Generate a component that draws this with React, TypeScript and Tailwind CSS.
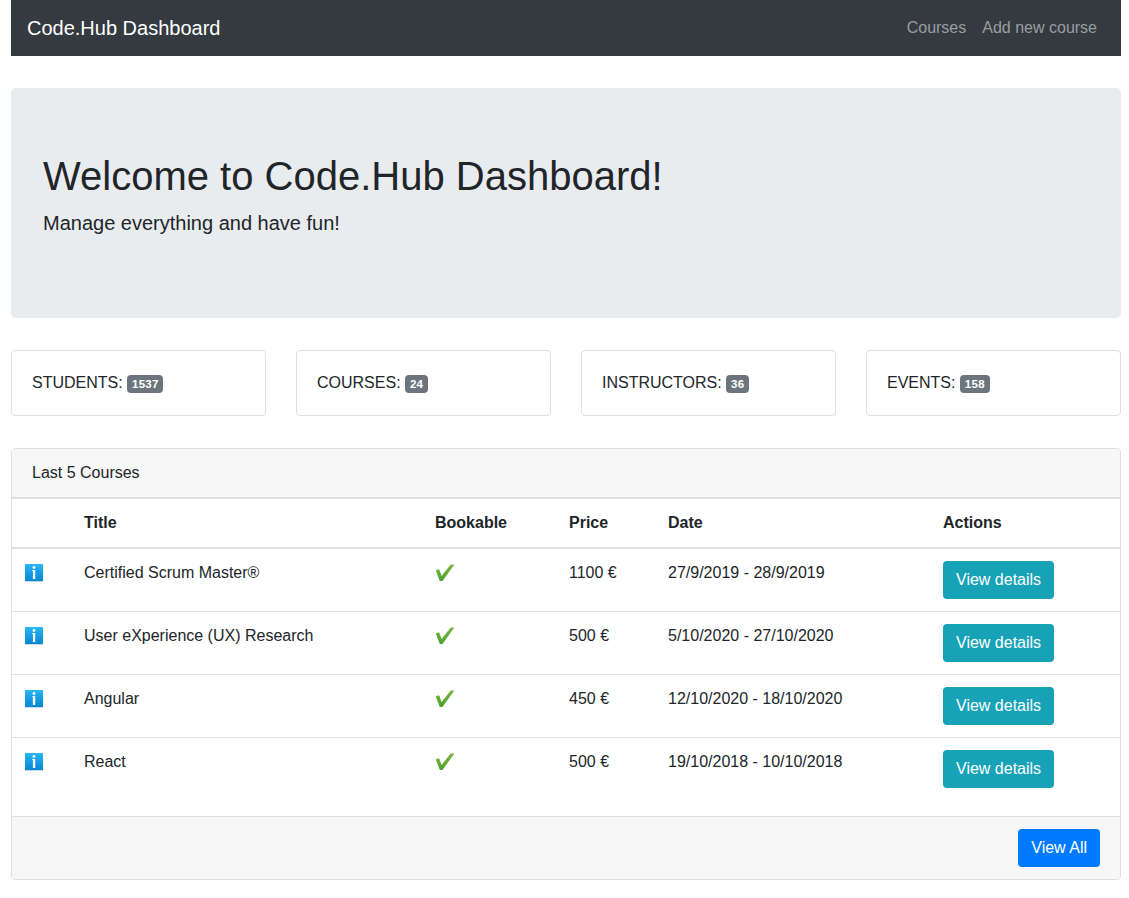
const stats = [
  { label: 'STUDENTS:', value: 1537 },
  { label: 'COURSES:', value: 24 },
  { label: 'INSTRUCTORS:', value: 36 },
  { label: 'EVENTS:', value: 158 },
];
const courses = [
  { title: 'Certified Scrum Master®', price: '1100 €', date: '27/9/2019 - 28/9/2019' },
  { title: 'User eXperience (UX) Research', price: '500 €', date: '5/10/2020 - 27/10/2020' },
  { title: 'Angular', price: '450 €', date: '12/10/2020 - 18/10/2020' },
  { title: 'React', price: '500 €', date: '19/10/2018 - 10/10/2018' },
];
const columns = 'grid grid-cols-[60px_351px_134px_99px_275px_1fr]';

function InfoIcon() {
  return (
    <svg viewBox="0 0 20 20" className="mt-[2px] h-5 w-5">
      <defs>
        <linearGradient id="info" x1="0" y1="0" x2="0" y2="1">
          <stop offset="0" stopColor="#29b6f6" />
          <stop offset="1" stopColor="#0288d1" />
        </linearGradient>
      </defs>
      <rect x="1" y="1.4" width="18" height="17.4" rx="0.6" fill="#b9cdd8" />
      <rect x="1" y="1" width="18" height="17" rx="0.5" fill="url(#info)" />
      <circle cx="10" cy="4.5" r="1.4" fill="#fff" />
      <path d="M8.2 7H11.2V16H8.9V8.1H8.2Z" fill="#fff" />
    </svg>
  );
}

function CheckIcon() {
  return (
    <svg viewBox="0 0 20 20" className="mt-[2px] h-5 w-5">
      <defs>
        <linearGradient id="check" x1="0" y1="0" x2="0" y2="1">
          <stop offset="0" stopColor="#7cb342" />
          <stop offset="1" stopColor="#4ca22f" />
        </linearGradient>
      </defs>
      <path
        d="M1 8Q0.8 7.4 1.5 7.1L3.3 6.4Q4 6.2 4.3 6.8L6.6 12.9L15.5 1.8Q15.8 1.5 16.3 1.5H18.7Q19.4 1.6 18.9 2.3L7.8 17.5Q7.4 18.1 6.8 18.1H5.5Q4.8 18.1 4.6 17.5Z"
        fill="url(#check)"
      />
    </svg>
  );
}

export default function App() {
  return (
    <div className="h-[898px] bg-white pr-2 pl-[11px] font-['Liberation_Sans',Arial,sans-serif] text-base leading-6 text-[#212529]">
      <nav className="flex h-14 items-center justify-between bg-[#343a40] px-4">
        <span className="text-xl leading-[30px] text-white">Code.Hub Dashboard</span>
        <div className="flex gap-4 pr-2 text-[#9a9da0]">
          <span>Courses</span>
          <span>Add new course</span>
        </div>
      </nav>
      <header className="mt-8 h-[230px] rounded-[4.8px] bg-[#e9ecef] px-8 pt-16">
        <h1 className="mb-2 text-[40px] leading-[48px]">Welcome to Code.Hub Dashboard!</h1>
        <p className="text-xl leading-[30px]">Manage everything and have fun!</p>
      </header>
      <section className="mt-8 grid grid-cols-4 gap-[30px]">
        {stats.map((s) => (
          <div key={s.label} className="h-[66px] rounded border border-[#dfdfdf] p-5">
            {s.label}{' '}
            <span className="inline-block rounded bg-[#6c757d] pt-[3px] pr-[4.7px] pb-[3px] pl-[4.9px] align-baseline text-[11.5px] leading-3 font-bold tracking-[0.28px] text-white">{s.value}</span>
          </div>
        ))}
      </section>
      <section className="mt-8 overflow-hidden rounded border border-[#dfdfdf]">
        <div className="h-[49px] border-b border-[#dfdfdf] bg-[#f7f7f7] px-5 py-3">Last 5 Courses</div>
        <div className={`${columns} h-[51px] border-t border-b-2 border-[#dee2e6] font-bold [&>*]:px-3 [&>*]:pt-3`}>
          <span />
          <span>Title</span>
          <span>Bookable</span>
          <span>Price</span>
          <span>Date</span>
          <span>Actions</span>
        </div>
        {courses.map((c, i) => (
          <div key={c.title} className={`${columns} ${i ? 'h-[63px] border-t border-[#dee2e6]' : 'h-[62px]'} [&>*]:px-3 [&>*]:pt-3`}>
            <div><InfoIcon /></div>
            <div>{c.title}</div>
            <div><CheckIcon /></div>
            <div>{c.price}</div>
            <div>{c.date}</div>
            <div>
              <button className="h-[38px] rounded bg-[#17a2b8] px-[13px] text-white">View details</button>
            </div>
          </div>
        ))}
        <div className="mt-4 flex h-[63px] justify-end border-t border-[#dfdfdf] bg-[#f7f7f7] px-5 py-3">
          <button className="h-[38px] rounded bg-[#007bff] px-[13px] text-white">View All</button>
        </div>
      </section>
    </div>
  );
}
